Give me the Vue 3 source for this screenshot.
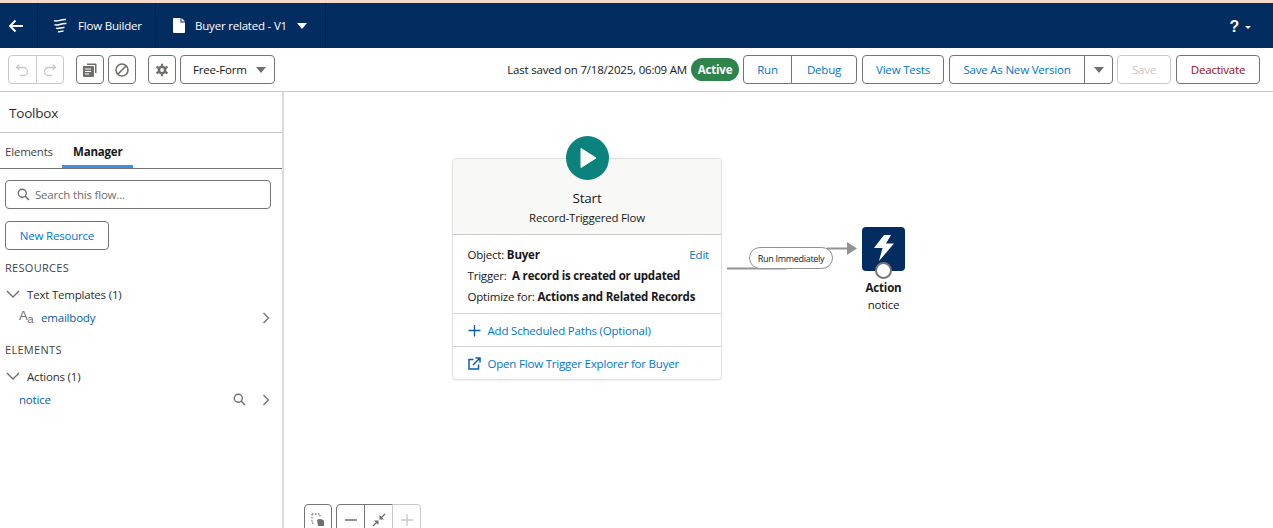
<script setup>
const leftGroups = [
  { title: 'RESOURCES', section: 'Text Templates (1)', item: 'emailbody', type: 'text' },
  { title: 'ELEMENTS', section: 'Actions (1)', item: 'notice', type: 'element' }
]
</script>

<template>
  <div class="page">
    <div class="strip"></div>
    <header class="nav">
      <div class="cell back">
        <svg width="16" height="14" viewBox="0 0 16 14"><path d="M15 7H2M7.500 1.500 2 7l5.500 5.500" fill="none" stroke="#fff" stroke-width="1.800"/></svg>
      </div>
      <div class="cell app">
        <svg width="15" height="15" viewBox="0 0 15 15"><path d="M1 2.500C4 4.500 8 .8 13 1.500M1.500 6.500C4 8.500 8 4.800 13.500 5.500M3 10c2.500 1.800 5-1 8.500-.5M5 13.500c2 1 3.500-.8 5.500-.5" fill="none" stroke="#fff" stroke-width="1.500"/></svg>
        <span>Flow Builder</span>
      </div>
      <div class="cell doc">
        <svg width="12" height="15" viewBox="0 0 12 15"><path d="M1 0h6.500v4.500H12V14a1 1 0 0 1-1 1H1a1 1 0 0 1-1-1V1a1 1 0 0 1 1-1zM8.500 0 12 3.500H8.500z" fill="#fff"/></svg>
        <span class="doc-name">Buyer related - V1</span>
        <i class="caret white"></i>
      </div>
      <div class="help">
        <span class="q">?</span>
        <i class="caret white tiny"></i>
      </div>
    </header>

    <div class="toolbar">
      <div class="tools">
        <div class="group muted">
          <button class="btn icon wide">
            <svg width="14" height="14" viewBox="0 0 14 14"><path d="M4 1.500 1.500 4.500 4.500 7M2 4.500h6.500a4 4 0 0 1 0 8H5" fill="none" stroke="#c9c7c5" stroke-width="1.300"/></svg>
          </button>
          <button class="btn icon wide">
            <svg width="14" height="14" viewBox="0 0 14 14"><path d="M10 1.500l2.500 3L9.500 7M12 4.500H5.500a4 4 0 0 0 0 8H9" fill="none" stroke="#c9c7c5" stroke-width="1.300"/></svg>
          </button>
        </div>
        <button class="btn icon solo gap-l">
          <svg width="14" height="14" viewBox="0 0 14 14"><path d="M4 .5h8.500a1 1 0 0 1 1 1V10h-1.500V2H4z" fill="#706e6b"/><path d="M1 3h9a1 1 0 0 1 1 1v9a1 1 0 0 1-1 1H1a1 1 0 0 1-1-1V4a1 1 0 0 1 1-1z" fill="#706e6b"/><path d="M2 6h6M2 8.500h6M2 11h4" stroke="#fff" stroke-width="1"/></svg>
        </button>
        <button class="btn icon solo">
          <svg width="14" height="14" viewBox="0 0 14 14"><circle cx="7" cy="7" r="6" fill="none" stroke="#706e6b" stroke-width="1.600"/><path d="M3 11 11 3" stroke="#706e6b" stroke-width="1.600"/></svg>
        </button>
        <button class="btn icon solo gap-m">
          <svg width="14" height="14" viewBox="0 0 14 14"><path d="M7 .8v2M7 11.200v2M1.500 3.800l1.800 1M10.700 9.200l1.800 1M1.500 10.200l1.800-1M10.700 4.800l1.800-1" stroke="#706e6b" stroke-width="2.200"/><path d="M7 2 11.300 4.500v5L7 12 2.700 9.500v-5z" fill="#706e6b"/><circle cx="7" cy="7" r="1.900" fill="#fff"/></svg>
        </button>
        <button class="btn select">
          <span>Free-Form</span>
          <i class="caret gray"></i>
        </button>
      </div>
      <div class="actions">
        <span class="saved">Last saved on 7/18/2025, 06:09 AM</span>
        <span class="pill">Active</span>
        <div class="group run">
          <button class="btn link run-b">Run</button>
          <button class="btn link debug-b">Debug</button>
        </div>
        <button class="btn link tests-b">View Tests</button>
        <div class="group">
          <button class="btn link save-new">Save As New Version</button>
          <button class="btn more"><i class="caret gray small"></i></button>
        </div>
        <button class="btn save-b">Save</button>
        <button class="btn deact">Deactivate</button>
      </div>
    </div>

    <div class="main">
      <aside class="side">
        <div class="side-title">Toolbox</div>
        <div class="tabs">
          <span class="tab">Elements</span>
          <span class="tab on">Manager</span>
        </div>
        <div class="search">
          <svg width="13" height="13" viewBox="0 0 13 13"><circle cx="5.300" cy="5.300" r="4" fill="none" stroke="#706e6b" stroke-width="1.400"/><path d="M8.300 8.300 12 12" stroke="#706e6b" stroke-width="1.600"/></svg>
          <span>Search this flow...</span>
        </div>
        <button class="btn link new-res">New Resource</button>
        <section v-for="g in leftGroups" :key="g.title" class="res">
          <div class="res-title">{{ g.title }}</div>
          <div class="res-section">
            <svg width="14" height="9" viewBox="0 0 14 9"><path d="M1 1l6 6 6-6" fill="none" stroke="#706e6b" stroke-width="1.400"/></svg>
            <span>{{ g.section }}</span>
          </div>
          <div class="res-item" :class="g.type">
            <span v-if="g.type === 'text'" class="aa">A<small>a</small></span>
            <a>{{ g.item }}</a>
            <svg v-if="g.type === 'element'" class="mag" width="13" height="13" viewBox="0 0 13 13"><circle cx="5.300" cy="5.300" r="4" fill="none" stroke="#706e6b" stroke-width="1.400"/><path d="M8.300 8.300 12 12" stroke="#706e6b" stroke-width="1.600"/></svg>
            <svg class="chev" width="8" height="12" viewBox="0 0 8 12"><path d="M1.500 1l5 5-5 5" fill="none" stroke="#706e6b" stroke-width="1.300"/></svg>
          </div>
        </section>
      </aside>

      <main class="canvas">
        <div class="play">
          <svg width="18" height="22" viewBox="0 0 18 22"><path d="M1 1.500v19L16 11z" fill="#fff" stroke="#fff" stroke-linejoin="round"/></svg>
        </div>
        <article class="card">
          <div class="card-head">
            <div class="start">Start</div>
            <div class="sub">Record-Triggered Flow</div>
          </div>
          <div class="card-body">
            <div class="row"><span>Object: <b>Buyer</b></span><a>Edit</a></div>
            <div class="row"><span>Trigger: &nbsp;<b>A record is created or updated</b></span></div>
            <div class="row"><span>Optimize for: <b>Actions and Related Records</b></span></div>
          </div>
          <div class="card-link first">
            <svg width="13" height="13" viewBox="0 0 13 13"><path d="M6.500 1v11.500M.5 6.500h12" stroke="#0b5cab" stroke-width="1.300"/></svg>
            <a>Add Scheduled Paths (Optional)</a>
          </div>
          <div class="card-link">
            <svg width="13" height="13" viewBox="0 0 13 13"><path d="M5.500 2.500H1v9.500h9.500V7.500" fill="none" stroke="#0b5cab" stroke-width="1.500"/><path d="M5 8l6.500-6.500M7.500 1H12v4.500" fill="none" stroke="#0b5cab" stroke-width="1.500"/></svg>
            <a>Open Flow Trigger Explorer for Buyer</a>
          </div>
        </article>

        <svg class="wire" width="140" height="40" viewBox="0 0 140 40">
          <path d="M0 27.500h60M100 7.500h21" fill="none" stroke="#939393" stroke-width="2"/>
          <path d="M120 1l10 6.500-10 6.500z" fill="#939393"/>
        </svg>
        <div class="run-pill">Run Immediately</div>

        <div class="action-box">
          <svg width="22" height="26" viewBox="0 0 22 26"><path d="M11 0h7l-5 8.500h8L6 26l3.500-13H1z" fill="#fff"/></svg>
        </div>
        <div class="dot"></div>
        <div class="action-label"><b>Action</b><span>notice</span></div>

        <div class="zoom">
          <button class="zbtn one">
            <svg width="14" height="14" viewBox="0 0 14 14"><path d="M1 1h8v4M1 1v9h3" fill="none" stroke="#8a8886" stroke-width="1.300" stroke-dasharray="1.500 1.500"/><path d="M6 7c2-2 6-1 7 1v5H7z" fill="#706e6b"/></svg>
          </button>
          <div class="zgroup">
            <button class="zbtn"><svg width="14" height="14" viewBox="0 0 14 14"><path d="M1 7h12" stroke="#706e6b" stroke-width="1.500"/></svg></button>
            <button class="zbtn"><svg width="14" height="14" viewBox="0 0 14 14"><path d="M13 1 8.500 5.500M1 13l4.500-4.500" stroke="#706e6b" stroke-width="1.300"/><path d="M7.500 2v4.500H12zM2 7.500h4.500V12z" fill="#706e6b"/></svg></button>
            <button class="zbtn off"><svg width="14" height="14" viewBox="0 0 14 14"><path d="M1 7h12M7 1v12" stroke="#c9c7c5" stroke-width="1.300"/></svg></button>
          </div>
        </div>
      </main>
    </div>
  </div>
</template>

<style>
html, body { margin: 0; overflow: hidden; background: #fff; }
</style>

<style scoped>
.page { width: 1273px; height: 528px; overflow: hidden; font-family: "Open Sans", "Noto Sans", sans-serif; font-size: 11.500px; color: #181818; display: flex; flex-direction: column; letter-spacing: -0.2px; }
button { font: inherit; letter-spacing: inherit; margin: 0; padding: 0; }
a { color: #0b5cab; }
.strip { height: 3px; background: #f0d9cd; flex: none; }
.nav { height: 45px; flex: none; background: #032d60; display: flex; color: #fff; }
.cell { display: flex; align-items: center; border-right: 1px solid #0a2240; box-sizing: border-box; }
.back { width: 38px; padding-left: 8px; }
.app { width: 118px; padding-left: 15px; gap: 10px; }
.doc { width: 170px; padding-left: 17px; }
.doc-name { margin-left: 10px; }
.doc .caret { margin-left: 10px; }
.caret { display: inline-block; width: 0; height: 0; border-left: 5px solid transparent; border-right: 5px solid transparent; border-top: 6px solid #fff; }
.caret.gray { border-top-color: #706e6b; }
.caret.tiny { border-left-width: 3px; border-right-width: 3px; border-top-width: 3px; margin-left: 6px; }
.help { margin-left: auto; display: flex; align-items: center; padding: 3px 22px 0 0; }
.q { font-size: 16px; font-weight: 700; font-family: "Liberation Sans", sans-serif; }

.toolbar { height: 44px; flex: none; box-sizing: border-box; border-bottom: 1px solid #c9c9c9; display: flex; justify-content: space-between; align-items: center; padding: 0 13px 0 8px; }
.tools, .actions, .group { display: flex; align-items: center; }
.btn { height: 29px; box-sizing: border-box; background: #fff; border: 1px solid #747474; border-radius: 4px; color: #181818; display: flex; align-items: center; justify-content: center; }
.link { color: #0176d3; }
.icon.solo { width: 28px; margin-left: 4px; }
.gap-l { margin-left: 12px !important; }
.gap-m { margin-left: 12px !important; }
.group .btn { border-radius: 0; }
.group .btn:first-child { border-radius: 4px 0 0 4px; }
.group .btn:last-child { border-radius: 0 4px 4px 0; margin-left: -1px; }
.group.muted .btn { border-color: #c9c9c9; }
.wide { width: 28.500px; }
.select { width: 95px; margin-left: 4px; justify-content: space-between; padding: 0 8px 0 12px; }
.saved { margin-right: 4px; }
.pill { width: 48px; height: 23px; background: #2e844a; border-radius: 12px; color: #fff; font-weight: 700; display: flex; align-items: center; justify-content: center; margin-right: 4px; }
.run-b { width: 49px; }
.debug-b { width: 66px; }
.tests-b { width: 82px; margin-left: 5px; }
.actions > .group:nth-of-type(2) { margin-left: 5px; }
.save-new { width: 136px; }
.more { width: 29px; }
.save-b { width: 54px; margin-left: 4px; border-color: #c9c9c9; color: #c9c7c5; }
.deact { width: 84px; margin-left: 5px; color: #a5070f; }

.main { flex: 1; display: flex; min-height: 0; }
.side { width: 284px; flex: none; box-sizing: border-box; border-right: 2px solid #dcdcdc; overflow: hidden; }
.side-title { height: 41px; box-sizing: border-box; border-bottom: 1px solid #c9c9c9; padding: 12px 0 0 9px; font-size: 13.500px; line-height: 19px; color: #2e2e2e; }
.tabs { height: 36px; box-sizing: border-box; border-bottom: 1px solid #747474; display: flex; }
.tab { width: 62px; box-sizing: border-box; padding: 11px 0 0 5px; line-height: 16px; color: #444; }
.tab.on { width: 71px; padding-left: 11px; font-weight: 700; color: #181818; border-bottom: 3px solid #3d8fe8; height: 35px; }
.search { margin: 11px 0 0 5px; width: 266px; height: 29px; box-sizing: border-box; border: 1px solid #747474; border-radius: 4px; display: flex; align-items: center; padding-left: 11px; gap: 5px; color: #706e6b; }
.new-res { width: 104px; margin: 12px 0 0 5px; }
.res-title { margin: 10px 0 0 5px; line-height: 15px; color: #444; letter-spacing: 0.3px; font-size: 11px; height: 15px; }
.res:last-child .res-title { margin-top: 17px; }
.res-section { display: flex; align-items: center; height: 16px; margin-top: 11px; padding-left: 6px; gap: 7px; color: #2e2e2e; }
.res-item { display: flex; align-items: center; height: 16px; margin-top: 7px; padding-left: 19px; position: relative; }
.res-item a { color: #0b5cab; }
.aa { width: 22px; font-size: 13px; color: #706e6b; line-height: 14px; font-family: "Liberation Sans", sans-serif; }
.aa small { font-size: 11px; vertical-align: -3px; }
.chev { margin-left: auto; margin-right: 12px; position: relative; top: 1px; }
.mag { margin-left: auto; margin-right: 16px; }
.mag + .chev { margin-left: 0; }

.canvas { flex: 1; position: relative; overflow: hidden; background: #fff; }
.play { position: absolute; left: 282px; top: 44px; width: 43px; height: 44px; border-radius: 50%; background: #0b827c; display: flex; align-items: center; justify-content: center; padding-left: 3px; box-sizing: border-box; z-index: 2; }
.card { position: absolute; left: 168px; top: 66px; width: 270px; box-sizing: border-box; border: 1px solid #e0e0e0; border-radius: 4px; background: #fff; box-shadow: 0 1px 2px rgba(0,0,0,.06); overflow: hidden; }
.card-head { height: 76px; box-sizing: border-box; background: #f8f8f6; border-bottom: 1px solid #c9c9c9; text-align: center; padding-top: 29px; }
.start { font-size: 13.500px; line-height: 20px; color: #181818; }
.sub { line-height: 20px; }
.card-body { height: 79px; box-sizing: border-box; padding: 9px 12px 0 14.500px; border-bottom: 1px solid #d4d4d4; }
.row { display: flex; justify-content: space-between; line-height: 21px; }
.card-link { height: 33px; box-sizing: border-box; display: flex; align-items: center; padding-left: 14.500px; gap: 7px; }
.card-link.first { height: 32px; }
.card-link + .card-link { border-top: 1px solid #d4d4d4; }
.card-link a, .row a { color: #0176d3; }
.wire { position: absolute; left: 443px; top: 149px; }
.run-pill { position: absolute; left: 465px; top: 155px; width: 84px; height: 22px; box-sizing: border-box; border: 1px solid #939393; border-radius: 11px; background: #fff; font-size: 9px; letter-spacing: -0.3px; display: flex; align-items: center; justify-content: center; }
.action-box { position: absolute; left: 578px; top: 135px; width: 43px; height: 44px; background: #032d60; border-radius: 4px; display: flex; justify-content: center; padding-top: 8px; box-sizing: border-box; }
.dot { position: absolute; left: 591px; top: 170px; width: 17px; height: 17px; box-sizing: border-box; border-radius: 50%; background: #fff; border: 2px solid #747474; }
.action-label { position: absolute; left: 559px; top: 187px; width: 81px; text-align: center; display: flex; flex-direction: column; line-height: 17px; }
.zoom { position: absolute; left: 20px; top: 412px; display: flex; gap: 4px; }
.zbtn { width: 28px; height: 32px; background: #fff; border: 1px solid #747474; border-radius: 4px; box-sizing: border-box; display: flex; align-items: center; justify-content: center; }
.zgroup { display: flex; }
.zgroup .zbtn { border-radius: 0; margin-left: -1px; width: 29px; }
.zgroup .zbtn:first-child { border-radius: 4px 0 0 4px; margin-left: 0; }
.zgroup .zbtn:last-child { border-radius: 0 4px 4px 0; border-color: #c9c9c9; }
</style>
